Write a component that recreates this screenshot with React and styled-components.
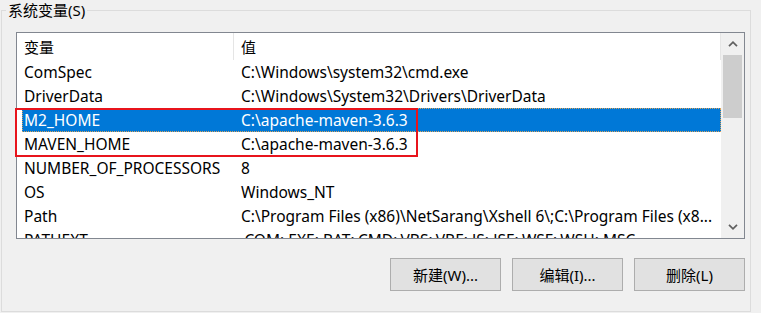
import styled, { createGlobalStyle } from 'styled-components';

const GlobalStyle = createGlobalStyle`
    body {
        margin: 0;
        background: #f0f0f0;
        font-family: "Noto Sans", "Noto Sans CJK SC", sans-serif;
        font-size: 15px;
        color: #000;
    }
`;

const Page = styled.div`
    padding: 10px 0 0 1px;
`;

const Group = styled.div`
    position: relative;
    box-sizing: border-box;
    width: 750px;
    height: 302px;
    border: 1px solid #dcdcdc;
    padding: 21px 4px 0 14px;
    display: flex;
    flex-direction: column;
`;

const Legend = styled.div`
    position: absolute;
    top: -11px;
    left: 4px;
    padding: 0 2px;
    line-height: 20px;
    background: #f0f0f0;
`;

const ListFrame = styled.div`
    position: relative;
`;

const ListBox = styled.div`
    box-sizing: border-box;
    width: 729px;
    height: 207px;
    border: 1px solid #828790;
    background: #fff;
    display: flex;
    overflow: hidden;
`;

const Table = styled.div`
    flex: 1;
    display: flex;
    flex-direction: column;
`;

const Header = styled.div`
    display: flex;
    height: 27px;
    flex-shrink: 0;
`;

const HeaderCell = styled.div`
    box-sizing: border-box;
    width: ${p => (p.$w ? `${p.$w}px` : 'auto')};
    flex: ${p => (p.$w ? 'none' : 1)};
    padding-left: 7px;
    border-right: 1px solid #e5e5e5;
    display: flex;
    align-items: center;
`;

const Row = styled.div`
    display: flex;
    height: 24px;
    flex-shrink: 0;
    padding-left: 5px;
`;

const RowBody = styled.div`
    flex: 1;
    display: flex;
    align-items: center;
    background: ${p => (p.$selected ? '#0078d7' : 'transparent')};
    color: ${p => (p.$selected ? '#fff' : '#000')};
    outline: ${p => (p.$selected ? '1px dotted #d9a35c' : 'none')};
    outline-offset: -1px;
`;

const Cell = styled.div`
    box-sizing: border-box;
    width: ${p => (p.$w ? `${p.$w}px` : 'auto')};
    flex: ${p => (p.$w ? 'none' : 1)};
    padding-left: ${p => p.$pad}px;
    font-size: 15.5px;
    white-space: nowrap;
    overflow: hidden;
`;

const ScrollBar = styled.div`
    width: 23px;
    background: #f0f0f0;
    display: flex;
    flex-direction: column;
`;

const Arrow = styled.div`
    height: 22px;
    display: flex;
    align-items: center;
    justify-content: center;
`;

const Track = styled.div`
    flex: 1;
`;

const Thumb = styled.div`
    height: 63px;
    margin: 0 2px 0 2px;
    background: #cdcdcd;
`;

const Annotation = styled.div`
    position: absolute;
    left: -1px;
    top: 76px;
    width: 403px;
    height: 49px;
    box-sizing: border-box;
    border: 2px solid #e8141c;
    pointer-events: none;
`;

const Buttons = styled.div`
    display: flex;
    justify-content: flex-end;
    gap: 11px;
    margin-top: 19px;
    padding-right: 1px;
`;

const Button = styled.button`
    box-sizing: border-box;
    width: 111px;
    height: 33px;
    background: #e1e1e1;
    border: 1px solid #adadad;
    font-family: inherit;
    font-size: 15px;
    color: #000;
    padding: 0;
`;

const rows = [
    ['ComSpec', 'C:\\Windows\\system32\\cmd.exe'],
    ['DriverData', 'C:\\Windows\\System32\\Drivers\\DriverData'],
    ['M2_HOME', 'C:\\apache-maven-3.6.3', true],
    ['MAVEN_HOME', 'C:\\apache-maven-3.6.3'],
    ['NUMBER_OF_PROCESSORS', '8'],
    ['OS', 'Windows_NT'],
    ['Path', 'C:\\Program Files (x86)\\NetSarang\\Xshell 6\\;C:\\Program Files (x8...'],
    ['PATHEXT', '.COM;.EXE;.BAT;.CMD;.VBS;.VBE;.JS;.JSE;.WSF;.WSH;.MSC'],
];

const Chevron = ({ up }) => (
    <svg width="10" height="6" viewBox="0 0 10 6">
        <polyline
            points={up ? '1,5.2 5,1.2 9,5.2' : '1,0.8 5,4.8 9,0.8'}
            fill="none"
            stroke="#606060"
            strokeWidth="1.7"
        />
    </svg>
);

const App = () => (
    <Page>
        <GlobalStyle />
        <Group>
            <Legend>系统变量(S)</Legend>
            <ListFrame>
                <ListBox>
                    <Table>
                        <Header>
                            <HeaderCell $w={217}>变量</HeaderCell>
                            <HeaderCell>值</HeaderCell>
                        </Header>
                        {rows.map(([name, value, sel]) => (
                            <Row key={name}>
                                <RowBody $selected={sel}>
                                    <Cell $w={212} $pad={2}>{name}</Cell>
                                    <Cell $pad={7}>{value}</Cell>
                                </RowBody>
                            </Row>
                        ))}
                    </Table>
                    <ScrollBar>
                        <Arrow><Chevron up /></Arrow>
                        <Track><Thumb /></Track>
                        <Arrow><Chevron /></Arrow>
                    </ScrollBar>
                </ListBox>
                <Annotation />
            </ListFrame>
            <Buttons>
                <Button>新建(W)...</Button>
                <Button>编辑(I)...</Button>
                <Button>删除(L)</Button>
            </Buttons>
        </Group>
    </Page>
);

export default App;
